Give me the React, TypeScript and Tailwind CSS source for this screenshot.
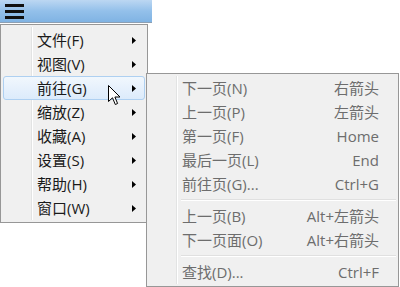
import React from "react";

const FONT = { fontFamily: '"Open Sans", "Noto Sans CJK SC", sans-serif' };

const MAIN_ITEMS = ["文件(F)", "视图(V)", "前往(G)", "缩放(Z)", "收藏(A)", "设置(S)", "帮助(H)", "窗口(W)"];

type SubItem = { label: string; key: string } | "sep";

const SUB_ITEMS: SubItem[] = [
  { label: "下一页(N)", key: "右箭头" },
  { label: "上一页(P)", key: "左箭头" },
  { label: "第一页(F)", key: "Home" },
  { label: "最后一页(L)", key: "End" },
  { label: "前往页(G)...", key: "Ctrl+G" },
  "sep",
  { label: "上一页(B)", key: "Alt+左箭头" },
  { label: "下一页面(O)", key: "Alt+右箭头" },
  "sep",
  { label: "查找(D)...", key: "Ctrl+F" },
];

function Arrow() {
  return (
    <svg width="4" height="7" viewBox="0 0 4 7" className="shrink-0">
      <path d="M0 0 L4 3.5 L0 7 Z" fill="#000" />
    </svg>
  );
}

function Cursor() {
  return (
    <svg width="13" height="21" viewBox="0 0 13 21" className="absolute left-[108px] top-[85px]">
      <path
        d="M0.5 0.5 L0.5 16.5 L4.5 12.8 L7.3 19.5 L9.6 18.5 L6.9 12 L12 12 Z"
        fill="#fff"
        stroke="#000"
        strokeWidth="1"
        strokeLinejoin="round"
      />
    </svg>
  );
}

export default function App() {
  return (
    <div className="relative w-[400px] h-[287px] bg-white overflow-hidden" style={FONT}>
      {/* Top bar */}
      <div className="w-[152px] h-[23px] bg-gradient-to-b from-[#bcd7f2] via-[#93c0ea] to-[#80b3e3] border-b border-[#8c9fb3] flex items-center pl-[5px]">
        <div className="flex flex-col gap-[3px]">
          <div className="w-[19px] h-[3px] bg-[#111]" />
          <div className="w-[19px] h-[3px] bg-[#111]" />
          <div className="w-[19px] h-[3px] bg-[#111]" />
        </div>
      </div>

      {/* Main menu */}
      <div className="absolute left-0 top-[24px] w-[148px] h-[199px] bg-[#f0f0f0] border border-[#979797] py-[3px] pl-[2px] pr-[2px]">
        <div className="absolute left-[30px] top-[2px] bottom-[2px] w-[2px] border-l border-[#e2e3e3] bg-white" />
        {MAIN_ITEMS.map((label, i) => (
          <div
            key={label}
            className={`relative h-[24px] flex items-center pl-[33px] pr-[8px] text-[15px] text-[#1a1a1a] rounded-[3px] ${
              i === 2 ? "bg-gradient-to-b from-[#f1f7fd] to-[#dcebfb] border border-[#aed0f1]" : "border border-transparent"
            }`}
          >
            <span className="flex-1 leading-none">{label}</span>
            <Arrow />
          </div>
        ))}
      </div>

      {/* Submenu */}
      <div className="absolute left-[146px] top-[73px] w-[253px] h-[214px] bg-[#f0f0f0] border border-[#979797] py-[2px] pl-[2px] pr-[2px]">
        <div className="absolute left-[29px] top-[2px] bottom-[2px] w-[2px] border-l border-[#e2e3e3] bg-white" />
        {SUB_ITEMS.map((item, i) =>
          item === "sep" ? (
            <div key={i} className="relative h-[8px] flex items-center pl-[32px]">
              <div className="w-full h-[2px] border-t border-[#e0e0e0] border-b border-b-white" />
            </div>
          ) : (
            <div key={i} className="relative h-[24px] flex items-center pl-[33px] pr-[17px] text-[15px] text-[#6d6d6d]">
              <span className="flex-1 leading-none">{item.label}</span>
              <span className="leading-none">{item.key}</span>
            </div>
          )
        )}
      </div>

      <Cursor />
    </div>
  );
}
